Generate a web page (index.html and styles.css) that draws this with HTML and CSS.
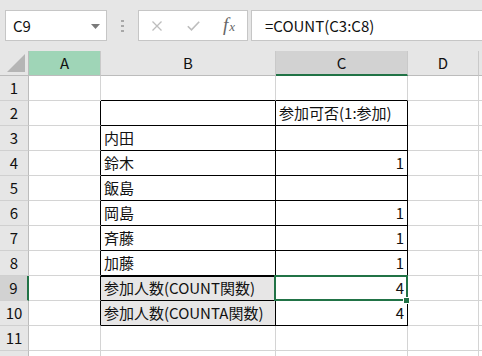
FILE: index.html
```html
<!DOCTYPE html>
<html lang="ja">
<head>
<meta charset="utf-8">
<link rel="stylesheet" href="styles.css">
</head>
<body>
<div class="toolbar">
  <div class="namebox">
    <span class="name">C9</span>
    <svg class="dd" width="9" height="5" viewBox="0 0 9 5"><path d="M0 0h9L4.5 5z" fill="#7a7a7a"/></svg>
  </div>
  <div class="grip">
    <svg width="3" height="12" viewBox="0 0 3 12"><rect x="0" y="0" width="3" height="2" fill="#a8a8a8"/><rect x="0" y="5" width="3" height="2" fill="#a8a8a8"/><rect x="0" y="10" width="3" height="2" fill="#a8a8a8"/></svg>
  </div>
  <div class="fxbox">
    <svg class="ico-x" width="10" height="10" viewBox="0 0 10 10"><path d="M0.5 0.5L9.5 9.5M9.5 0.5L0.5 9.5" stroke="#bdbdbd" stroke-width="1.3" fill="none"/></svg>
    <svg class="ico-ok" width="13" height="10" viewBox="0 0 13 10"><path d="M0.8 5.2L4.5 8.8L12.2 0.8" stroke="#bdbdbd" stroke-width="1.6" fill="none"/></svg>
    <span class="fx">f<i>x</i></span>
  </div>
  <div class="formula">=COUNT(C3:C8)</div>
</div>
<div class="sheet">
  <div class="corner"><svg width="18" height="18" viewBox="0 0 18 18"><path d="M18 0V18H0z" fill="#b5b5b5"/></svg></div>
  <div class="ch hover">A</div>
  <div class="ch">B</div>
  <div class="ch sel">C</div>
  <div class="ch">D</div>
  <div class="ch e"></div>

  <div class="rh">1</div><div class="c"></div><div class="c bb"></div><div class="c bb"></div><div class="c"></div><div class="c e"></div>
  <div class="rh">2</div><div class="c br"></div><div class="c t"></div><div class="c t">参加可否(1:参加)</div><div class="c"></div><div class="c e"></div>
  <div class="rh">3</div><div class="c br"></div><div class="c t">内田</div><div class="c t"></div><div class="c"></div><div class="c e"></div>
  <div class="rh">4</div><div class="c br"></div><div class="c t">鈴木</div><div class="c t num">1</div><div class="c"></div><div class="c e"></div>
  <div class="rh">5</div><div class="c br"></div><div class="c t">飯島</div><div class="c t"></div><div class="c"></div><div class="c e"></div>
  <div class="rh">6</div><div class="c br"></div><div class="c t">岡島</div><div class="c t num">1</div><div class="c"></div><div class="c e"></div>
  <div class="rh">7</div><div class="c br"></div><div class="c t">斉藤</div><div class="c t num">1</div><div class="c"></div><div class="c e"></div>
  <div class="rh">8</div><div class="c br"></div><div class="c t">加藤</div><div class="c t num">1</div><div class="c"></div><div class="c e"></div>
  <div class="rh sel">9</div><div class="c br"></div><div class="c t fill thick">参加人数(COUNT関数)</div><div class="c t num active">4<span class="handle"></span></div><div class="c"></div><div class="c e"></div>
  <div class="rh">10</div><div class="c br"></div><div class="c t fill">参加人数(COUNTA関数)</div><div class="c t num">4</div><div class="c"></div><div class="c e"></div>
  <div class="rh">11</div><div class="c"></div><div class="c"></div><div class="c"></div><div class="c"></div><div class="c e"></div>
  <div class="rh last"></div><div class="c"></div><div class="c"></div><div class="c"></div><div class="c"></div><div class="c e"></div>
</div>
</body>
</html>
```
FILE: styles.css
```css
* { box-sizing: border-box; }
html, body { margin: 0; padding: 0; }
body {
  width: 482px;
  height: 356px;
  overflow: hidden;
  background: #fff;
  font-family: "Noto Sans CJK JP", "Noto Sans", sans-serif;
  color: #111;
}
.toolbar {
  height: 51px;
  background: #e6e6e6;
  display: flex;
  align-items: flex-start;
  padding-top: 10px;
  padding-left: 5px;
}
.namebox {
  width: 102px;
  height: 31px;
  background: #fff;
  border: 1px solid #c6c6c6;
  display: flex;
  align-items: center;
  justify-content: space-between;
  padding: 0 6px 0 7px;
}
.name { font-size: 15px; line-height: 1; }
.dd { margin-top: 1px; }
.grip {
  width: 31px;
  height: 31px;
  display: flex;
  align-items: center;
  justify-content: center;
}
.fxbox {
  width: 110px;
  height: 31px;
  background: #fff;
  border: 1px solid #c6c6c6;
  display: flex;
  align-items: center;
  padding-left: 13px;
}
.ico-x { margin-right: 25px; }
.ico-ok { margin-right: 23px; }
.fx {
  font-family: "Liberation Serif", serif;
  font-style: italic;
  font-size: 19px;
  line-height: 1;
  color: #666;
  margin-top: -2px;
}
.fx i { font-size: 13px; margin-left: 1px; }
.formula {
  margin-left: 3px;
  flex: 1;
  height: 31px;
  background: #fff;
  border: 1px solid #c6c6c6;
  border-right: none;
  font-size: 15px;
  line-height: 29px;
  padding-left: 13px;
}
.sheet {
  display: grid;
  grid-template-columns: 29px 72px 175px 132px 71px 1fr;
  grid-template-rows: 25px repeat(12, 25px);
}
.corner {
  background: #e6e6e6;
  border-right: 1px solid #bcbcbc;
  border-bottom: 1px solid #bcbcbc;
  display: flex;
  align-items: flex-end;
  justify-content: flex-end;
  padding: 0 3px 3px 0;
}
.ch {
  background: #e6e6e6;
  border-right: 1px solid #c9c9c9;
  border-bottom: 1px solid #bcbcbc;
  font-size: 15px;
  line-height: 24px;
  text-align: center;
}
.ch.hover { background: #9fd5b7; }
.ch.sel { background: #d2d2d2; border-bottom: 2px solid #217346; }
.rh {
  background: #e6e6e6;
  border-right: 1px solid #bcbcbc;
  border-bottom: 1px solid #d0d0d0;
  font-size: 15px;
  line-height: 24px;
  text-align: center;
}
.rh.sel { background: #d2d2d2; border-right: 2px solid #217346; }
.c {
  border-right: 1px solid #d4d4d4;
  border-bottom: 1px solid #d4d4d4;
  font-size: 15px;
  line-height: 24px;
  padding: 0 3px;
  white-space: nowrap;
  overflow: visible;
}
.c.e { border-right: none; }
.c.bb { border-bottom-color: #000; }
.c.br { border-right-color: #000; }
.c.t { border-right-color: #000; border-bottom-color: #000; }
.c.num { text-align: right; }
.c.fill { background: #e7e6e6; }
.c.thick { box-shadow: inset 0 1px 0 #000; }
.c.active { position: relative; }
.c.active::after {
  content: "";
  position: absolute;
  left: -2px;
  top: -1px;
  right: -1px;
  bottom: -1px;
  border: 2px solid #217346;
  pointer-events: none;
}
.handle {
  position: absolute;
  right: -3px;
  bottom: -4px;
  width: 5px;
  height: 5px;
  background: #217346;
  border: 1px solid #fff;
  box-sizing: content-box;
  z-index: 2;
}
```
